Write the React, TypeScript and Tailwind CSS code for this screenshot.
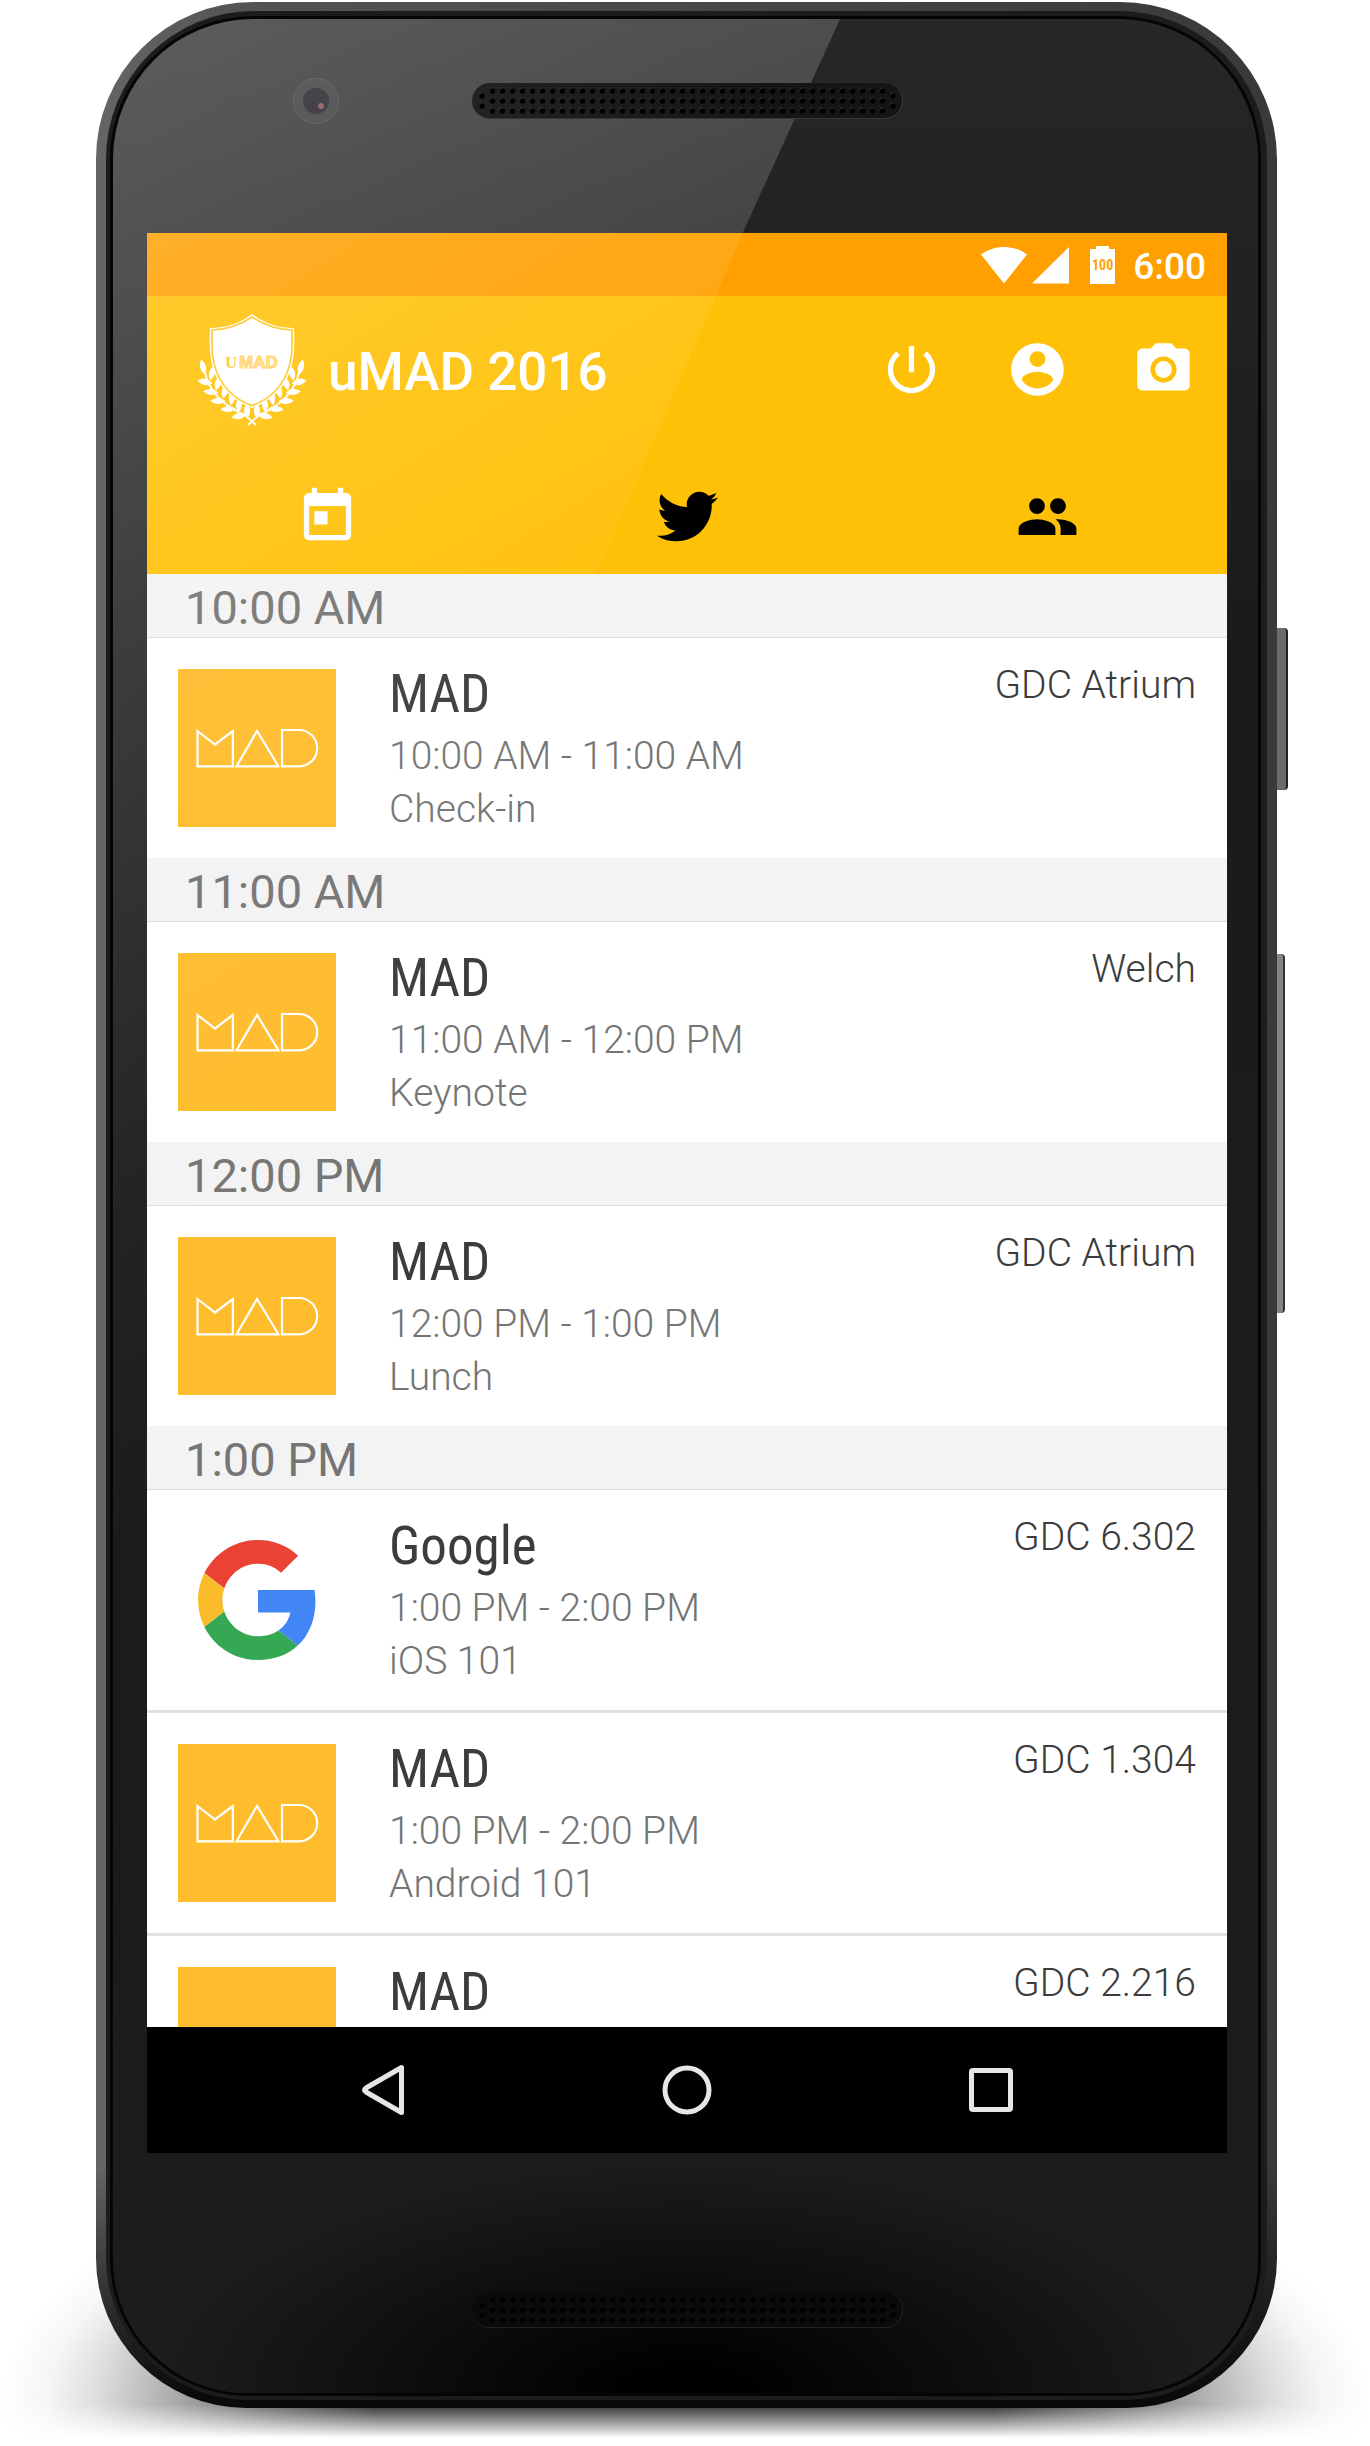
import type { ReactNode } from "react";
import { FaTwitter } from "react-icons/fa";

type Session = {
  host: "MAD" | "Google";
  place: string;
  time?: string;
  title?: string;
};

type Slot = { start: string; sessions: Session[] };

const slots: Slot[] = [
  {
    start: "10:00 AM",
    sessions: [{ host: "MAD", time: "10:00 AM - 11:00 AM", title: "Check-in", place: "GDC Atrium" }],
  },
  {
    start: "11:00 AM",
    sessions: [{ host: "MAD", time: "11:00 AM - 12:00 PM", title: "Keynote", place: "Welch" }],
  },
  {
    start: "12:00 PM",
    sessions: [{ host: "MAD", time: "12:00 PM - 1:00 PM", title: "Lunch", place: "GDC Atrium" }],
  },
  {
    start: "1:00 PM",
    sessions: [
      { host: "Google", time: "1:00 PM - 2:00 PM", title: "iOS 101", place: "GDC 6.302" },
      { host: "MAD", time: "1:00 PM - 2:00 PM", title: "Android 101", place: "GDC 1.304" },
      { host: "MAD", place: "GDC 2.216" },
    ],
  },
];

function Glyph({ d, children }: { d?: string; children?: ReactNode }) {
  return (
    <svg viewBox="0 0 24 24" className="size-[63px] fill-current" aria-hidden="true">
      {d && <path d={d} />}
      {children}
    </svg>
  );
}

function MadLogo() {
  return (
    <svg viewBox="0 0 158 158" className="size-full bg-[#ffbc2c]" role="img" aria-label="MAD logo">
      <g fill="none" stroke="#fff" strokeWidth="2.2">
        <path d="M19.5 62 37 75.5 54.8 62V97.3H19.5Z" />
        <path d="M79 62 58.5 97.3H100.5Z" />
        <path d="M104 61H121a18.1 18.1 0 0 1 0 36.3H104Z" />
      </g>
    </svg>
  );
}

function GoogleLogo() {
  return (
    <svg viewBox="0 0 48 48" className="ml-[2px] size-[120px]" role="img" aria-label="Google logo">
      <path fill="#EA4335" d="M24 9.5c3.54 0 6.71 1.22 9.21 3.6l6.85-6.85C35.9 2.38 30.47 0 24 0 14.62 0 6.51 5.38 2.56 13.22l7.98 6.19C12.43 13.72 17.74 9.5 24 9.5z" />
      <path fill="#4285F4" d="M46.98 24.55c0-1.57-.15-3.09-.38-4.55H24v9.02h12.94c-.58 2.96-2.26 5.48-4.78 7.18l7.73 6c4.51-4.18 7.09-10.36 7.09-17.65z" />
      <path fill="#FBBC2C" d="M10.53 28.59c-.48-1.45-.76-2.99-.76-4.59s.27-3.14.76-4.59l-7.98-6.19C.92 16.46 0 20.12 0 24c0 3.88.92 7.54 2.56 10.78l7.97-6.19z" />
      <path fill="#34A853" d="M24 48c6.48 0 11.93-2.13 15.89-5.81l-7.73-6c-2.15 1.45-4.92 2.3-8.16 2.3-6.26 0-11.57-4.22-13.47-9.91l-7.98 6.19C6.51 42.62 14.62 48 24 48z" />
    </svg>
  );
}

/* Leaf positions along the right-hand laurel branch: x, y, rotation in degrees. */
const leaves = [
  [104, 53, 14],
  [95, 59, -14],
  [102, 68, 78],
  [89, 69, -16],
  [96, 78, 84],
  [82, 77, -14],
  [89, 87, 88],
  [75, 84, -10],
  [79, 95, 94],
  [68, 91, -6],
  [68, 102, 102],
  [60, 97, 0],
];

function Branch() {
  return (
    <g fill="#fff">
      <path d="M102 58C99 76 84 92 62 101L51 111" fill="none" stroke="#fff" strokeWidth="1.8" />
      {leaves.map(([x, y, r]) => (
        <path key={`${x}-${y}`} transform={`translate(${x} ${y}) rotate(${r})`} d="M0 7.5C-4 3-4-3 0-7.5 4-3 4 3 0 7.5Z" />
      ))}
    </g>
  );
}

function Crest() {
  return (
    <svg viewBox="0 0 110 112" className="h-[112px] w-[110px]" role="img" aria-label="uMAD crest">
      <Branch />
      <g transform="translate(110 0) scale(-1 1)">
        <Branch />
      </g>
      <path d="M55 0C43 9 29 14 13 14C12 34 13 48 18 60C25 77 38 88 55 94C72 88 85 77 92 60C97 48 98 34 97 14C81 14 67 9 55 0Z" fill="#fff" />
      <path d="M55 3C43 11 30 15.5 15 16C14.5 34 15 47 20 59C27 75 39 86 55 91.5C71 86 83 75 90 59C95 47 95.5 34 95 16C80 15.5 67 11 55 3Z" fill="none" stroke="#ffc61e" strokeWidth="1.7" />
      <text x="28" y="54" fontFamily="Liberation Serif, serif" fontWeight="700" fontSize="17" fill="#ffc52e">
        U
      </text>
      <text x="42" y="54" fontFamily="Liberation Sans, sans-serif" fontWeight="700" fontSize="17" fill="#ffe394" stroke="#ffcf50" strokeWidth="1">
        MAD
      </text>
    </svg>
  );
}

function Speaker({ dim }: { dim?: boolean }) {
  const dots: number[][] = [];
  for (let i = 0; i < 40; i++) for (let j = 0; j < 3; j++) dots.push([20.5 + i * 10, 8 + j * 10]);
  for (const x of [10, 421]) dots.push([x, 13], [x, 23]);
  return (
    <div
      className={
        dim
          ? "relative z-10 h-9 w-[431px] overflow-hidden rounded-full border-r border-b border-[#222] bg-[#0a0a0a]"
          : "relative z-10 h-9 w-[431px] overflow-hidden rounded-full border-r border-b border-[#383838] bg-[linear-gradient(to_right,#222,#151515_70%)]"
      }
    >
      <svg viewBox="0 0 431 36" className="h-9 w-[431px]" aria-hidden="true">
        {dots.map(([x, y]) => (
          <g key={`${x}-${y}`}>
            <circle cx={x - 0.6} cy={y - 1} r="2.4" fill={dim ? "#181818" : "#3c3c3c"} />
            <circle cx={x} cy={y} r="2.7" fill="#000" />
          </g>
        ))}
      </svg>
    </div>
  );
}

function StatusBar() {
  return (
    <div className="flex h-[63px] shrink-0 items-center justify-end bg-[#ffa000] pr-[21px] text-white">
      <svg viewBox="0 0 48 38" className="h-[38px] w-12" aria-label="Wi-Fi" role="img">
        <path d="M1 8.5C14-1.5 34-1.5 47 8.5L24 37.5Z" fill="currentColor" />
      </svg>
      <svg viewBox="0 0 37 38" className="ml-1 h-[38px] w-[37px]" aria-label="Signal" role="img">
        <path d="M37 1V37.5H0Z" fill="currentColor" />
      </svg>
      <div className="ml-[21px] flex w-[25px] flex-col items-center">
        <div className="h-[3px] w-[13px] bg-white" />
        <div className="h-[35px] w-[25px] bg-white pt-2 text-center font-['Roboto_Condensed',Roboto,sans-serif] text-[14px] leading-4 font-bold text-[#ffa000]">
          100
        </div>
      </div>
      <span className="ml-[18px] pt-1 text-[37px] leading-[44px] font-medium">6:00</span>
    </div>
  );
}

function AppBar() {
  return (
    <header className="shrink-0 bg-[#ffc107] text-white">
      <div className="flex h-[147px] items-center pr-8 pl-[50px]">
        <Crest />
        <h1 className="ml-[21px] pt-1 text-[53px] leading-[60px] font-medium">uMAD 2016</h1>
        <div className="ml-auto flex gap-[63px]">
          <button type="button" aria-label="Sign out">
            <Glyph d="M13 3h-2v10h2V3zm4.83 2.17l-1.42 1.42C17.99 7.86 19 9.81 19 12c0 3.87-3.13 7-7 7s-7-3.13-7-7c0-2.19 1.01-4.14 2.58-5.42L6.17 5.17C4.23 6.82 3 9.26 3 12c0 4.97 4.03 9 9 9s9-4.03 9-9c0-2.74-1.23-5.18-3.17-6.83z" />
          </button>
          <button type="button" aria-label="Account">
            <Glyph d="M12 2C6.48 2 2 6.48 2 12s4.48 10 10 10 10-4.48 10-10S17.52 2 12 2zm0 3c1.66 0 3 1.34 3 3s-1.34 3-3 3-3-1.34-3-3 1.34-3 3-3zm0 14.2c-2.5 0-4.71-1.28-6-3.22.03-1.99 4-3.08 6-3.08 1.99 0 5.97 1.09 6 3.08-1.29 1.94-3.5 3.22-6 3.22z" />
          </button>
          <button type="button" aria-label="Camera">
            <Glyph d="M9 2L7.17 4H4c-1.1 0-2 .9-2 2v12c0 1.1.9 2 2 2h16c1.1 0 2-.9 2-2V6c0-1.1-.9-2-2-2h-3.17L15 2H9zm3 15c-2.76 0-5-2.24-5-5s2.24-5 5-5 5 2.24 5 5-2.24 5-5 5z">
              <circle cx="12" cy="12" r="3.2" />
            </Glyph>
          </button>
        </div>
      </div>
      <nav className="grid h-[131px] grid-cols-3 pt-4" aria-label="Sections">
        <button type="button" aria-label="Schedule" className="flex items-center justify-center">
          <Glyph d="M19 3h-1V1h-2v2H8V1H6v2H5c-1.11 0-1.99.9-1.99 2L3 19c0 1.1.89 2 2 2h14c1.1 0 2-.9 2-2V5c0-1.1-.9-2-2-2zm0 16H5V8h14v11zM7 10h5v5H7z" />
        </button>
        <button type="button" aria-label="Twitter" className="flex items-center justify-center text-black">
          <FaTwitter className="size-[61px]" />
        </button>
        <button type="button" aria-label="Attendees" className="flex items-center justify-center text-black">
          <Glyph d="M16 11c1.66 0 2.99-1.34 2.99-3S17.66 5 16 5c-1.66 0-3 1.34-3 3s1.34 3 3 3zm-8 0c1.66 0 2.99-1.34 2.99-3S9.66 5 8 5C6.34 5 5 6.34 5 8s1.34 3 3 3zm0 2c-2.33 0-7 1.17-7 3.5V19h14v-2.5c0-2.33-4.67-3.5-7-3.5zm8 0c-.29 0-.62.02-.97.05 1.16.84 1.97 1.97 1.97 3.45V19h6v-2.5c0-2.33-4.67-3.5-7-3.5z" />
        </button>
      </nav>
    </header>
  );
}

function SessionRow({ session }: { session: Session }) {
  return (
    <li className="box-content flex h-[158px] items-start px-[31px] py-[31px]">
      <div className="flex size-[158px] shrink-0 items-center justify-center">
        {session.host === "MAD" ? <MadLogo /> : <GoogleLogo />}
      </div>
      <div className="ml-[53px] text-[39px] leading-[53px] font-light text-[#757575]">
        <h3 className="mb-[11px] font-['Roboto_Condensed',Roboto,sans-serif] text-[53px] leading-[50px] font-normal text-[#3c3c3c]">
          {session.host}
        </h3>
        {session.time && <p>{session.time}</p>}
        {session.title && <p>{session.title}</p>}
      </div>
      <p className="ml-auto text-[39px] leading-8 font-light text-[#3c3c3c]">{session.place}</p>
    </li>
  );
}

function Schedule() {
  return (
    <main className="min-h-0 flex-1 overflow-hidden bg-white">
      {slots.map((slot) => (
        <section key={slot.start}>
          <h2 className="h-16 border-b border-[#dcdcdc] bg-[#f3f3f3] pl-[38px] text-[47px] leading-[68px] font-normal text-[#757575]">
            {slot.start}
          </h2>
          <ul className="divide-y-3 divide-[#e0e0e0]">
            {slot.sessions.map((session) => (
              <SessionRow key={session.place} session={session} />
            ))}
          </ul>
        </section>
      ))}
    </main>
  );
}

function SystemNav() {
  return (
    <nav className="flex h-[126px] shrink-0 items-center justify-center gap-[240px] bg-black" aria-label="System">
      <button type="button" aria-label="Back">
        <svg viewBox="0 0 64 64" className="size-16" fill="none" stroke="#e6e6e6" strokeWidth="5" strokeLinejoin="round">
          <path d="M50.5 9.5V54.5L15 34Q12 32 15 30Z" />
        </svg>
      </button>
      <button type="button" aria-label="Home">
        <svg viewBox="0 0 64 64" className="size-16" fill="none" stroke="#e6e6e6" strokeWidth="5">
          <circle cx="32" cy="32" r="22" />
        </svg>
      </button>
      <button type="button" aria-label="Recent apps">
        <svg viewBox="0 0 64 64" className="size-16" fill="none" stroke="#e6e6e6" strokeWidth="5">
          <rect x="12.5" y="12.5" width="39" height="39" rx="1.5" />
        </svg>
      </button>
    </nav>
  );
}

export default function App() {
  return (
    <div className="relative overflow-hidden bg-white pt-[2px] pr-[93px] pb-[38px] pl-24 font-[Roboto,sans-serif]">
      <div className="absolute inset-x-0 bottom-0 h-[330px] bg-[radial-gradient(ellipse_50%_90%_at_50%_88%,rgba(0,0,0,.84)_45%,rgba(0,0,0,.58)_61%,rgba(0,0,0,.32)_75%,rgba(0,0,0,.13)_86%,rgba(0,0,0,.04)_93%,transparent_100%)] [mask-image:linear-gradient(to_bottom,transparent,black_70%,black_calc(100%_-_42px),transparent_calc(100%_-_8px))]" />
      <div className="relative">
        <div className="absolute top-[626px] -right-[11px] h-[162px] w-4 rounded-r-sm border-r-2 border-[#222] bg-[#6b696c]" />
        <div className="absolute top-[952px] -right-2 h-[359px] w-4 rounded-r-sm border-r-2 border-[#333] bg-[#858386]" />
        <div className="relative rounded-t-[157px] rounded-b-[150px] bg-[linear-gradient(to_bottom,transparent_90%,#0a0a0a_99.5%),linear-gradient(to_right,#666466,#555355_12%,#3a3839)] px-[10px] pt-[9px] pb-2">
          <div className="rounded-t-[148px] rounded-b-[142px] bg-[#1c1c1c] pt-2 pr-[9px] pb-[7px] pl-[7px]">
            <div className="relative overflow-hidden rounded-t-[140px] rounded-b-[134px] bg-[radial-gradient(ellipse_46%_230px_at_50%_100%,#000_10%,transparent),linear-gradient(to_bottom,#272727,#1b1b1b_25%,#1c1c1d)] pr-[31px] pl-[34px] shadow-[0_0_0_3px_#050505]">
              <div className="pointer-events-none absolute inset-0 bg-[linear-gradient(148deg,rgba(255,255,255,.25),rgba(255,255,255,.17)_450px,rgba(255,255,255,.04)_1000px,transparent_1300px)] [clip-path:polygon(0_0,727px_0,0_1598px)]" />
              <div className="relative flex h-[214px] items-start justify-center pt-16">
                <div className="absolute top-[59px] left-[146px] flex size-[46px] items-center justify-center rounded-full border border-white/8 bg-white/4">
                  <div className="flex size-[26px] items-center justify-center rounded-full bg-[#454249]">
                    <div className="mt-[10px] ml-[10px] size-[6px] rounded-full bg-[#9a6e68]" />
                  </div>
                </div>
                <Speaker />
              </div>
              <div className="relative flex aspect-[9/16] flex-col overflow-hidden">
                <StatusBar />
                <AppBar />
                <Schedule />
                <SystemNav />
                <div className="pointer-events-none absolute inset-0 bg-[linear-gradient(148deg,rgba(255,255,255,.16),rgba(255,255,255,.05)_450px,transparent_1000px)] [clip-path:polygon(0_0,596px_0,0_1384px)]" />
              </div>
              <div className="flex h-[240px] items-start justify-center pt-[139px]">
                <Speaker dim />
              </div>
            </div>
          </div>
        </div>
      </div>
    </div>
  );
}
